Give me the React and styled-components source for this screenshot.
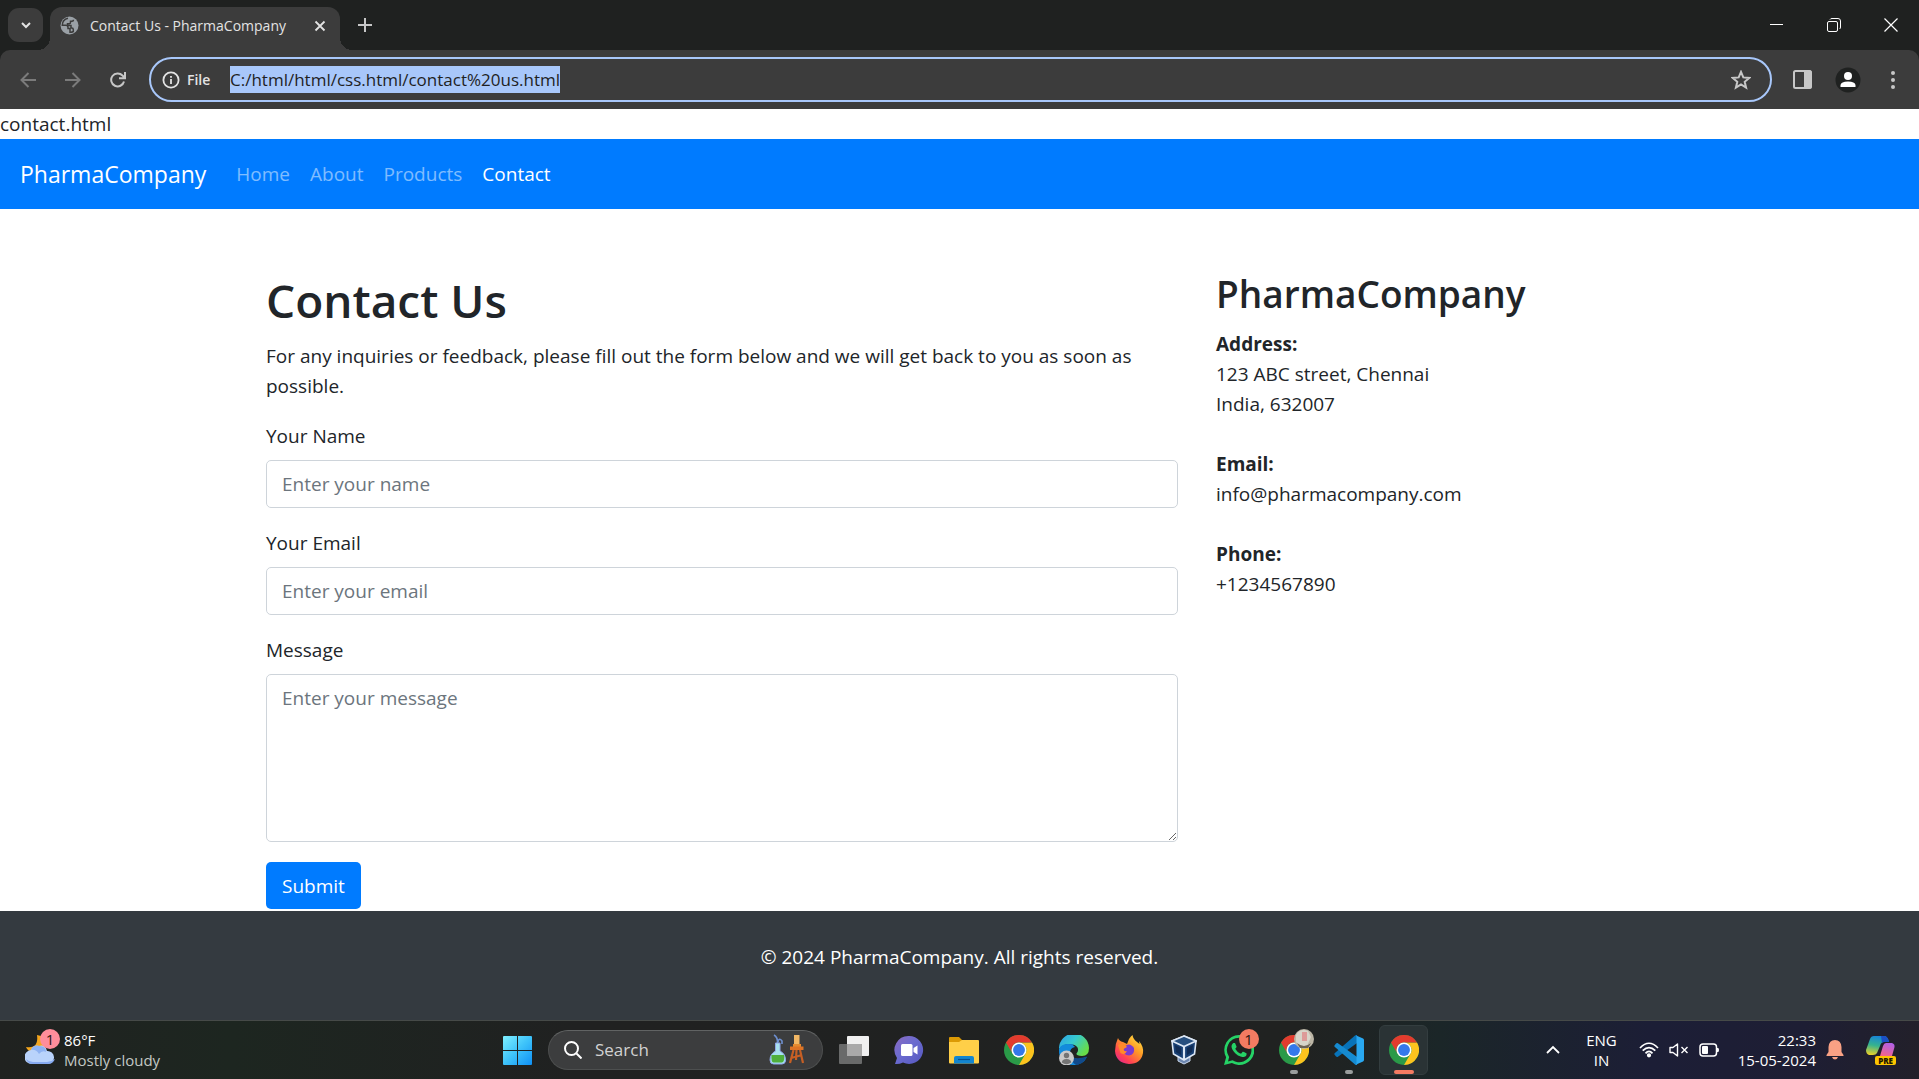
import React from "react";
import styled, { createGlobalStyle } from "styled-components";

const FONT = '"Open Sans", "Noto Sans", sans-serif';

const GlobalStyle = createGlobalStyle`
  *, *::before, *::after { box-sizing: border-box; }
  body {
    margin: 0;
    background: #fff;
    color: #212529;
    font-family: ${FONT};
    font-size: 19px;
    line-height: 30px;
  }
  button, input, textarea { font-family: inherit; }
  svg { display: block; flex: none; }
`;

const Screen = styled.div`
  min-height: 100vh;
  display: flex;
  flex-direction: column;
`;

/* ---------- browser window ---------- */

const TabStrip = styled.div`
  height: 50px;
  display: flex;
  align-items: flex-end;
  padding-left: 8px;
  background: #1f2120;
`;

const PlainButton = styled.button`
  display: flex;
  align-items: center;
  justify-content: center;
  width: ${(p) => p.$w || 45}px;
  height: ${(p) => p.$h || 42}px;
  padding: 0;
  border: 0;
  background: transparent;
  color: ${(p) => p.$color || "#c7c7c7"};
`;

const TabSearch = styled(PlainButton)`
  margin: 0 7px 8px 0;
  border-radius: 11px;
  background: #3c3c3c;
  color: #e3e3e3;
`;

const Tab = styled.div`
  position: relative;
  width: 290px;
  height: 43px;
  display: flex;
  align-items: center;
  gap: 11px;
  padding: 0 7px 6px 10px;
  border-radius: 12px 12px 0 0;
  background: #3c3c3c;
  color: #e3e3e3;

  &::before, &::after {
    content: "";
    position: absolute;
    bottom: 0;
    width: 12px;
    height: 12px;
  }
  &::before {
    right: 100%;
    background: radial-gradient(circle at 0 0, transparent 12px, #3c3c3c 12px);
  }
  &::after {
    left: 100%;
    background: radial-gradient(circle at 100% 0, transparent 12px, #3c3c3c 12px);
  }
`;

const TabTitle = styled.span`
  flex: 1;
  font-size: 14px;
  line-height: 20px;
  white-space: nowrap;
`;

const WindowButtons = styled.div`
  margin-left: auto;
  display: flex;
  height: 50px;
`;

const ToolbarBack = styled.div`
  background: #1f2120;
`;

const Toolbar = styled.div`
  height: 59px;
  display: flex;
  align-items: center;
  padding: 0 4px 0 5px;
  border-radius: 10px 10px 0 0;
  background: #3c3c3c;
`;

const Omnibox = styled.div`
  flex: 1;
  height: 45px;
  margin: 0 8px 0 9px;
  padding: 0 16px 0 11px;
  display: flex;
  align-items: center;
  border: 2px solid #a8c7fa;
  border-radius: 23px;
`;

const SchemeChip = styled.button`
  display: flex;
  align-items: center;
  gap: 7px;
  width: 68px;
  padding: 0;
  border: 0;
  background: transparent;
  color: #e3e3e3;
  font-size: 14px;
  font-weight: 600;
  line-height: 20px;
`;

const UrlInput = styled.input`
  field-sizing: content;
  height: 27px;
  padding: 0;
  border: 0;
  outline: 0;
  background: #a8c7fa;
  color: #1f1f1f;
  font-size: 17px;
  line-height: 27px;
`;

const StarButton = styled(PlainButton)`
  margin-left: auto;
`;

/* ---------- web page ---------- */

const Navbar = styled.nav`
  display: flex;
  align-items: center;
  height: 70px;
  padding: 0 20px;
  background: #007bff;
`;

const Brand = styled.a`
  margin-right: 20px;
  color: #fff;
  font-size: 23px;
  line-height: 38px;
  text-decoration: none;
`;

const NavLink = styled.a`
  padding: 10px;
  color: ${(p) => (p.$active ? "#fff" : "rgba(255, 255, 255, 0.5)")};
  text-decoration: none;
`;

const Main = styled.main`
  flex: 1;
`;

const Container = styled.div`
  width: 100%;
  max-width: 1425px;
  margin: 60px auto 0;
  display: grid;
  grid-template-columns: 2fr 1fr;
`;

const Column = styled.section`
  padding: 0 19px;
`;

const PageTitle = styled.h1`
  margin: 0 0 10px;
  font-size: 46px;
  font-weight: 600;
  line-height: 62px;
`;

const CompanyTitle = styled.h2`
  margin: 0 0 10px;
  font-size: 37px;
  font-weight: 600;
  line-height: 50px;
`;

const Text = styled.p`
  margin: 0 0 20px;
`;

const Block = styled.div`
  margin-bottom: 30px;
`;

const Field = styled.div`
  display: flex;
  flex-direction: column;
  gap: 9px;
  margin-bottom: 20px;
`;

const TextBox = styled.input`
  width: 100%;
  height: 48px;
  padding: 8px 15px;
  border: 1px solid #ced4da;
  border-radius: 5px;
  background: #fff;
  color: #495057;
  font-size: 19px;
  line-height: 30px;
  &::placeholder { color: #6c757d; opacity: 1; }
`;

const MessageBox = styled(TextBox)`
  display: block;
  height: auto;
  resize: vertical;
`;

const Submit = styled.button`
  height: 47px;
  padding: 0 16px;
  border: 0;
  border-radius: 5px;
  background: #007bff;
  color: #fff;
  font-size: 19px;
  line-height: 30px;
`;

const Footer = styled.footer`
  padding: 31px 20px 48px;
  background: #343a40;
  color: #fff;
  text-align: center;
`;

/* ---------- taskbar ---------- */

const Taskbar = styled.div`
  display: grid;
  grid-template-columns: 1fr auto 1fr;
  align-items: center;
  height: 59px;
  padding-left: 2px;
  border-top: 1px solid #464a48;
  background: linear-gradient(90deg, #202220 0%, #1d2620 12%, #202121 30%, #202221 68%, #1b2628 75%, #1c1e36 86%, #1e1e34 94%, #22202a 100%);
  color: #fff;
`;

const Weather = styled.button`
  justify-self: start;
  display: flex;
  align-items: center;
  gap: 9px;
  padding: 0 0 0 23px;
  border: 0;
  background: transparent;
  color: #fff;
  font-size: 15px;
  line-height: 20px;
  text-align: left;
`;

const Muted = styled.span`
  color: #c3c8c4;
`;

const Stack = styled.span`
  display: flex;
  flex-direction: column;
  align-items: ${(p) => p.$align || "flex-start"};
`;

const IconWrap = styled.span`
  position: relative;
  display: block;
`;

const Badge = styled.span`
  position: absolute;
  top: -6px;
  right: -5px;
  width: 20px;
  height: 20px;
  border-radius: 50%;
  background: ${(p) => p.$color};
  color: #2a1512;
  font-size: 15px;
  line-height: 20px;
  text-align: center;
`;

const Apps = styled.div`
  display: flex;
  align-items: center;
`;

const AppButton = styled.button`
  position: relative;
  display: flex;
  align-items: center;
  justify-content: center;
  width: 49px;
  height: 50px;
  margin: 0 3px;
  padding: 0;
  border: 1px solid ${(p) => (p.$active ? "#333d3f" : "transparent")};
  border-radius: 6px;
  background: ${(p) => (p.$active ? "#2a3335" : "transparent")};

  &::after {
    content: "";
    display: ${(p) => (p.$mark ? "block" : "none")};
    position: absolute;
    bottom: 0;
    left: 50%;
    width: ${(p) => (p.$active ? 20 : 8)}px;
    height: 4px;
    transform: translateX(-50%);
    border-radius: 2px;
    background: ${(p) => p.$mark};
  }
`;

const SearchBox = styled.label`
  display: flex;
  align-items: center;
  gap: 13px;
  width: 275px;
  height: 40px;
  margin: 0 3px;
  padding: 0 17px 0 15px;
  border: 1px solid #4d4f4f;
  border-top-color: #616363;
  border-radius: 20px;
  background: #3c3d3e;
`;

const SearchInput = styled.input`
  flex: 1;
  min-width: 0;
  padding: 0;
  border: 0;
  outline: 0;
  background: transparent;
  color: #fff;
  font-size: 17px;
  line-height: 24px;
  &::placeholder { color: #d2d2d2; opacity: 1; }
`;

const Tray = styled.div`
  justify-self: end;
  display: flex;
  align-items: center;
  padding-right: 23px;
`;

const TrayButton = styled.button`
  display: flex;
  align-items: center;
  gap: ${(p) => p.$gap || 0}px;
  margin-right: ${(p) => p.$after || 0}px;
  padding: 0;
  border: 0;
  background: transparent;
  color: #fff;
  font-size: 15px;
  line-height: 20px;
`;

/* ---------- drawings ---------- */

const Stroke = ({ size = 20, w = 2, d, children }) => (
  <svg width={size} height={size} viewBox={`0 0 ${size} ${size}`} fill="none" stroke="currentColor" strokeWidth={w}>
    {d && <path d={d} />}
    {children}
  </svg>
);

const Globe = () => (
  <svg width="19" height="19" viewBox="0 0 19 19">
    <circle cx="9.5" cy="9.5" r="9" fill="#9aa0a6" />
    <path d="M8 2.2C4.600 3 2.300 6 2.300 9.300h3.400c1.500 0 2.300.9 2.300 2.200v1h2v3.800c1 .2 2.200-.2 3.300-.8v-1.800c0-1-.6-1.600-1.500-1.600H11V9.500H7.500V7.700h1.800c.8 0 1.200-.5 1.200-1.200V5.300h1.500c.9 0 1.500-.7 1.500-1.500" fill="none" stroke="#3c3c3c" strokeWidth="1.500" />
  </svg>
);

const Chrome = () => (
  <svg width="30" height="30" viewBox="0 0 48 48">
    <circle cx="24" cy="24" r="24" fill="#2a9a48" />
    <path d="M24 12H44.800A24 24 0 0 1 24 48L34.400 30A12 12 0 0 0 24 12Z" fill="#fcc31e" />
    <path d="M3.200 12A24 24 0 0 1 44.800 12H24A12 12 0 0 0 13.600 30Z" fill="#e33b2e" />
    <circle cx="24" cy="24" r="12" fill="#fff" />
    <circle cx="24" cy="24" r="9.500" fill="#3478ea" />
  </svg>
);

const Windows = () => (
  <svg width="29" height="29" viewBox="0 0 29 29">
    <defs>
      <linearGradient id="win" x1="0" y1="0" x2="1" y2="1">
        <stop offset="0" stopColor="#7ff0ff" />
        <stop offset="0.500" stopColor="#3ec3fa" />
        <stop offset="1" stopColor="#0f90f5" />
      </linearGradient>
    </defs>
    <path d="M0 1Q0 0 1 0H14V14H0ZM15 0H28Q29 0 29 1V14H15ZM0 15H14V29H1Q0 29 0 28ZM15 15H29V28Q29 29 28 29H15Z" fill="url(#win)" />
  </svg>
);

const FlaskAndStool = () => (
  <svg width="36" height="32" viewBox="0 0 36 32">
    <path d="M5 1Q9 3 8.500 10M9 8Q10 3 13 7V10" fill="none" stroke="#6d8fd0" strokeWidth="1.600" />
    <path d="M6.500 9H11V17Q17 20 16.500 27Q16 30 13 30H4.500Q1 30 1 26Q1 20 6.500 17Z" fill="#a8e1ee" stroke="#8fa5e8" />
    <path d="M2.500 21H15Q16 28 13 28.500H4.500Q2 28.500 2.500 21Z" fill="#4faf3c" />
    <path d="M25 1H30.500V12H25Z" fill="#f1b765" />
    <path d="M24 10H32V13H24Z" fill="#e58b30" />
    <path d="M21 12.500H34.500V16H21Z" fill="#dd7426" />
    <path d="M24.500 16 21 29M31 16 34 29M27.500 16 27 26M22 24 33 21" fill="none" stroke="#c65f24" strokeWidth="2.200" />
  </svg>
);

const TaskView = () => (
  <svg width="30" height="28" viewBox="0 0 30 28">
    <rect x="8" y="0" width="22" height="20" rx="1" fill="#f0f0f0" />
    <rect x="0" y="8" width="23" height="20" rx="1" fill="#777" fillOpacity="0.850" />
    <rect x="8" y="8" width="15" height="12" fill="#a9a9a9" />
  </svg>
);

const Chat = () => (
  <svg width="30" height="30" viewBox="0 0 30 30">
    <defs>
      <linearGradient id="chat" x1="0" y1="0" x2="1" y2="1">
        <stop offset="0" stopColor="#8b6bc0" />
        <stop offset="0.450" stopColor="#6b6bd0" />
        <stop offset="1" stopColor="#5558c0" />
      </linearGradient>
    </defs>
    <path d="M15 1A14 14 0 1 1 9 27.600Q5 29.500 1 29L3 23A14 14 0 0 1 15 1Z" fill="url(#chat)" />
    <rect x="7" y="9" width="11.500" height="12" rx="1.500" fill="#fff" />
    <path d="M19.500 13 23.500 10.500V19.500L19.500 17Z" fill="#fff" />
  </svg>
);

const Explorer = () => (
  <svg width="30" height="28" viewBox="0 0 30 28">
    <path d="M0 2Q0 1 1 1H10L13 4V9H0Z" fill="#dc9a05" />
    <path d="M0 6H10L13 4H29Q30 4 30 5V26.500Q30 27.500 29 27.500H1Q0 27.500 0 26.500Z" fill="#ffcf48" />
    <path d="M5 27.500V22Q5 20 7 20H23Q25 20 25 22V27.500Z" fill="#1385cf" />
    <path d="M9 23.500H21" stroke="#084f8f" strokeWidth="1.200" />
  </svg>
);

const Edge = () => (
  <svg width="30" height="30" viewBox="0 0 30 30">
    <defs>
      <linearGradient id="edge" x1="0" y1="0" x2="1" y2="0.600">
        <stop offset="0" stopColor="#2d9ee8" />
        <stop offset="0.500" stopColor="#36c9cf" />
        <stop offset="1" stopColor="#68dc48" />
      </linearGradient>
    </defs>
    <path d="M0 15A15 15 0 0 1 15 9Q10 13 11.500 19Q14 27 28 22Q24 30 15 30A15 15 0 0 1 0 15Z" fill="#0c69b8" />
    <path d="M11.500 19Q14 26 28 21.500Q24 30 15 30Z" fill="#114a8b" />
    <path d="M0 14A15 15 0 0 1 30 13Q30 21 23 21Q17 21 17.500 18.500Q20 16 18.500 12.500Q16 9 11 9Q4 9 0 14Z" fill="url(#edge)" />
    <path d="M0 14Q2 9 9 9Q14 9 16 12Q10 13 11 20Q12 27 17 30Q0 31 0 14Z" fill="#138bdc" />
    <circle cx="7.500" cy="23" r="7.500" fill="#c9c9c9" />
    <circle cx="7.500" cy="20.500" r="2.700" fill="#747474" />
    <path d="M2.800 27.500Q3 24 7.500 24T12.200 27.500Q7.500 31 2.800 27.500Z" fill="#747474" />
  </svg>
);

const Firefox = () => (
  <svg width="30" height="30" viewBox="0 0 30 30">
    <defs>
      <linearGradient id="fox" x1="1" y1="0" x2="0.200" y2="1">
        <stop offset="0" stopColor="#fff04a" />
        <stop offset="0.450" stopColor="#ff9a26" />
        <stop offset="0.800" stopColor="#ff4055" />
        <stop offset="1" stopColor="#e02a8a" />
      </linearGradient>
    </defs>
    <path d="M4 3Q5 6 9 7L13 9 15 4Q17 1 18.500 0Q19 4 23 7L25.500 9 25 6Q30 12 29 18Q27 29 15 29Q2 28 1 16Q1 9 4 3Z" fill="url(#fox)" />
    <path d="M11 11Q16 7 20 13Q21 20 15 20.500Q9 20 9.500 14Z" fill="#7a3bd0" />
    <path d="M4 10Q9 6 13 12L9.500 14Q10 17 13 16Q11 21 6.500 18Z" fill="#ff8a2a" />
  </svg>
);

const VirtualBox = () => (
  <svg width="26" height="30" viewBox="0 0 26 30">
    <path d="M7 22H19V26L13 29 7 26Z" fill="#6d87b0" stroke="#c9d7ec" />
    <path d="M13 1 25 6 23.500 19 13 25 2.500 19 1 6Z" fill="#173f73" stroke="#dce7f5" strokeWidth="1.600" />
    <path d="M13 1 25 6 13 11.500 1 6Z" fill="#264f7f" stroke="#dce7f5" strokeWidth="1.600" />
    <path d="M13 11.500V25" stroke="#dce7f5" strokeWidth="2.200" />
    <path d="M4 10 10 13V20L5 17ZM22 10 16 13V20L21 17Z" fill="#102c55" />
  </svg>
);

const WhatsApp = () => (
  <svg width="30" height="30" viewBox="0 0 24 24" fill="#25d366">
    <path d="M17.472 14.382c-.297-.149-1.758-.867-2.030-.967-.273-.099-.471-.148-.670.150-.197.297-.767.966-.940 1.164-.173.199-.347.223-.644.075-.297-.150-1.255-.463-2.390-1.475-.883-.788-1.480-1.761-1.653-2.059-.173-.297-.018-.458.130-.606.134-.133.298-.347.446-.520.149-.174.198-.298.298-.497.099-.198.050-.371-.025-.520-.075-.149-.669-1.612-.916-2.207-.242-.579-.487-.500-.669-.510-.173-.008-.371-.010-.570-.010-.198 0-.520.074-.792.372-.272.297-1.040 1.016-1.040 2.479 0 1.462 1.065 2.875 1.213 3.074.149.198 2.096 3.200 5.077 4.487.709.306 1.262.489 1.694.625.712.227 1.360.195 1.871.118.571-.085 1.758-.719 2.006-1.413.248-.694.248-1.289.173-1.413-.074-.124-.272-.198-.570-.347" />
    <path fillRule="evenodd" d="M12 0A12 12 0 0 0 1.700 17.800L0 24 6.300 22.400A12 12 0 1 0 12 0ZM12 2.200A9.800 9.800 0 1 1 6.800 20.200L3.200 21.100 4.100 17.600A9.800 9.800 0 0 1 12 2.200Z" />
  </svg>
);

const VsCode = () => (
  <svg width="30" height="30" viewBox="0 0 100 100">
    <path d="M3 67Q-1 63 3 60L70 2Q74-1 77 1V27L12 73Q9 74 6 71Z" fill="#0873b9" />
    <path d="M3 33Q-1 37 3 40L70 98Q74 101 77 99V73L12 27Q9 26 6 29Z" fill="#168bd1" />
    <path d="M72 1 97 12Q100 14 100 17V83Q100 86 97 88L72 99Q75 98 75 93V7Q75 2 72 1Z" fill="#29a8f1" />
  </svg>
);

const Profile = () => (
  <svg width="20" height="20" viewBox="0 0 20 20">
    <circle cx="10" cy="10" r="10" fill="#bcb6a6" />
    <path d="M2 6Q6-1 14 2L17 8 13 17Q5 18 2 13Z" fill="#d8d4c9" />
    <path d="M8 3H13V12H8Z" fill="#dd9a98" />
    <path d="M3 14Q10 20 17 14L14 19H6Z" fill="#6c6154" />
  </svg>
);

const ProfileBadge = styled.span`
  position: absolute;
  top: -6px;
  right: -5px;
`;

const CloudMoon = () => (
  <svg width="30" height="30" viewBox="0 0 30 30">
    <path d="M12 0Q14 14 1 12Q3 18 12 17L20 12V2Z" fill="#f4a61d" />
    <path d="M7 29A7 7 0 0 1 6 15Q8 10 14 11Q20 9 22 16A6.500 6.500 0 0 1 23 29Z" fill="#b9d3fb" />
    <path d="M6 15Q8 9 15 11Q21 11 21 17 17 15 14 19 11 14 6 15Z" fill="#8fb3f2" />
    <path d="M1 24Q3 29 7 29H23Q28 29 30 24Q26 27 22 27H8Q4 27 1 24Z" fill="#86aaf0" />
  </svg>
);

const Wifi = () => (
  <svg width="20" height="16" viewBox="0 0 20 16" fill="none" stroke="currentColor" strokeWidth="1.700">
    <path d="M1 6Q10-3.500 19 6M3.700 8.700Q10 2.500 16.300 8.700M6.500 11.300Q10 7.500 13.500 11.300" />
    <circle cx="10" cy="13.300" r="1.300" fill="currentColor" />
  </svg>
);

const Mute = () => (
  <svg width="20" height="16" viewBox="0 0 20 16" fill="none" stroke="currentColor" strokeWidth="1.400">
    <path d="M1 5.500H4L8.500 2V14L4 10.500H1Z" strokeLinejoin="round" />
    <path d="M12.500 5 18.500 11M18.500 5 12.500 11" />
  </svg>
);

const Battery = () => (
  <svg width="21" height="14" viewBox="0 0 21 14">
    <rect x="1" y="1" width="16.500" height="12" rx="3" fill="none" stroke="currentColor" strokeWidth="1.500" />
    <rect x="3" y="3" width="6" height="8" rx="1" fill="currentColor" />
    <path d="M18 5H19Q20 5 20 7T19 9H18Z" fill="currentColor" />
  </svg>
);

const Bell = () => (
  <svg width="18" height="20" viewBox="0 0 18 20" fill="#f9a184">
    <path d="M9 0Q15 0 15.500 7V12L17.500 15V16H0.500V15L2.500 12V7Q3 0 9 0ZM6 17H12Q11 19.500 9 19.500T6 17Z" />
  </svg>
);

const Copilot = () => (
  <svg width="30" height="30" viewBox="0 0 30 30">
    <defs>
      <linearGradient id="copA" x1="0.500" y1="0" x2="0.300" y2="1">
        <stop offset="0" stopColor="#1784d8" />
        <stop offset="0.500" stopColor="#35b38e" />
        <stop offset="1" stopColor="#e8d02a" />
      </linearGradient>
      <linearGradient id="copB" x1="0.700" y1="0" x2="0.300" y2="1">
        <stop offset="0" stopColor="#b060e8" />
        <stop offset="1" stopColor="#f2648c" />
      </linearGradient>
    </defs>
    <path d="M8 1H19Q22 2 23 7H18Q15 7 14 11L11 18Q10 20 7 20H3Q0 19 0 15L4 4Q5 1 8 1Z" fill="url(#copA)" />
    <path d="M15 1H19Q22 2 23 7H18Q17 7 16 8Z" fill="#1b4fc4" />
    <path d="M20 8H26Q29 9 28.500 12L26 21H14L17 11Q18 8 20 8Z" fill="url(#copB)" />
  </svg>
);

const PreBadge = styled.span`
  position: absolute;
  right: 0;
  bottom: 0;
  padding: 0 3px;
  border-radius: 2px;
  background: #fdc500;
  color: #1c1700;
  font-size: 8px;
  font-weight: 800;
  line-height: 9px;
`;

/* ---------- data ---------- */

const navLinks = ["Home", "About", "Products", "Contact"];

const contactInfo = [
  { title: "Address:", lines: ["123 ABC street, Chennai", "India, 632007"] },
  { title: "Email:", lines: ["info@pharmacompany.com"] },
  { title: "Phone:", lines: ["+1234567890"] },
];

const taskApps = [
  { name: "Task View", icon: <TaskView /> },
  { name: "Chat", icon: <Chat /> },
  { name: "File Explorer", icon: <Explorer /> },
  { name: "Google Chrome", icon: <Chrome /> },
  { name: "Microsoft Edge", icon: <Edge /> },
  { name: "Firefox", icon: <Firefox /> },
  { name: "VirtualBox", icon: <VirtualBox /> },
  { name: "WhatsApp", icon: <WhatsApp />, badge: <Badge $color="#f47b62">1</Badge> },
  { name: "Chrome profile", icon: <Chrome />, badge: <ProfileBadge><Profile /></ProfileBadge>, mark: "#9a9d9d" },
  { name: "Visual Studio Code", icon: <VsCode />, mark: "#9a9d9d" },
  { name: "Chrome window", icon: <Chrome />, mark: "#f47b62", active: true },
];

/* ---------- sections ---------- */

function BrowserChrome() {
  return (
    <header>
      <TabStrip>
        <TabSearch $w={35} $h={34} aria-label="Search tabs">
          <Stroke size={14} d="M3 5 7 9 11 5" />
        </TabSearch>
        <Tab>
          <Globe />
          <TabTitle>Contact Us - PharmaCompany</TabTitle>
          <PlainButton $w={26} $h={26} $color="#e3e3e3" aria-label="Close tab">
            <Stroke size={12} w={1.8} d="M1.500 1.500 10.500 10.500M10.500 1.500 1.500 10.500" />
          </PlainButton>
        </Tab>
        <PlainButton $w={50} $h={50} aria-label="New tab">
          <Stroke size={14} d="M7 0V14M0 7H14" />
        </PlainButton>
        <WindowButtons>
          <PlainButton $w={57} $h={50} $color="#fff" aria-label="Minimize">
            <Stroke size={14} w={1} d="M0 6.500H13" />
          </PlainButton>
          <PlainButton $w={57} $h={50} $color="#fff" aria-label="Restore">
            <Stroke size={14} w={1}>
              <rect x="0.500" y="3.500" width="10" height="10" rx="1.500" />
              <path d="M3 1.500Q3.500 .5 5 .5H11Q13.500 .5 13.500 3V9Q13.500 10.500 12.500 11" />
            </Stroke>
          </PlainButton>
          <PlainButton $w={57} $h={50} $color="#fff" aria-label="Close">
            <Stroke size={14} w={1.2} d="M.5 .5 13.500 13.500M13.500 .5 .5 13.500" />
          </PlainButton>
        </WindowButtons>
      </TabStrip>
      <ToolbarBack>
        <Toolbar>
          <PlainButton $color="#7b7b7b" aria-label="Back">
            <Stroke size={16} d="M16 8H2M8.500 1 1.500 8 8.500 15" />
          </PlainButton>
          <PlainButton $color="#7b7b7b" aria-label="Forward">
            <Stroke size={16} d="M0 8H14M7.500 1 14.500 8 7.500 15" />
          </PlainButton>
          <PlainButton aria-label="Reload">
            <Stroke size={16} d="M14 9.500A6.500 6.500 0 1 1 12.500 3.500L15 6M15 0V6.200H9" />
          </PlainButton>
          <Omnibox>
            <SchemeChip>
              <Stroke size={18} w={1.8}>
                <circle cx="9" cy="9" r="7.600" />
                <path d="M9 8V13M9 5V6.800" />
              </Stroke>
              File
            </SchemeChip>
            <UrlInput aria-label="Address" defaultValue="C:/html/html/css.html/contact%20us.html" spellCheck={false} />
            <StarButton $w={26} $h={26} aria-label="Bookmark this tab">
              <Stroke size={20} w={2} d="M10 1.900 12.300 7.400 18.200 7.900 13.700 11.800 15.100 17.700 10 14.500 4.900 17.700 6.300 11.800 1.800 7.900 7.700 7.400Z" />
            </StarButton>
          </Omnibox>
          <PlainButton aria-label="Side panel">
            <Stroke size={19}>
              <rect x="1" y="1" width="17" height="17" rx="1.500" />
              <path d="M11.500 1H18V18H11.500Z" fill="currentColor" strokeWidth="1" />
            </Stroke>
          </PlainButton>
          <PlainButton aria-label="Profile">
            <svg width="26" height="26" viewBox="0 0 26 26">
              <circle cx="13" cy="13" r="12.500" fill="#1f2120" />
              <circle cx="13" cy="9" r="4" fill="#fff" />
              <path d="M5.500 20V18Q6 14.500 13 14.500T20.500 18V20Z" fill="#fff" />
            </svg>
          </PlainButton>
          <PlainButton aria-label="Menu">
            <svg width="4" height="18" viewBox="0 0 4 18" fill="currentColor">
              <circle cx="2" cy="2" r="2" />
              <circle cx="2" cy="9" r="2" />
              <circle cx="2" cy="16" r="2" />
            </svg>
          </PlainButton>
        </Toolbar>
      </ToolbarBack>
    </header>
  );
}

function ContactPage() {
  return (
    <>
      <div>contact.html</div>
      <Navbar>
        <Brand href="#">PharmaCompany</Brand>
        {navLinks.map((name) => (
          <NavLink key={name} href="#" $active={name === "Contact"}>{name}</NavLink>
        ))}
      </Navbar>
      <Main>
        <Container>
          <Column>
            <PageTitle>Contact Us</PageTitle>
            <Text>For any inquiries or feedback, please fill out the form below and we will get back to you as soon as possible.</Text>
            <form onSubmit={(e) => e.preventDefault()}>
              <Field>
                <label htmlFor="name">Your Name</label>
                <TextBox id="name" type="text" placeholder="Enter your name" />
              </Field>
              <Field>
                <label htmlFor="email">Your Email</label>
                <TextBox id="email" type="email" placeholder="Enter your email" />
              </Field>
              <Field>
                <label htmlFor="message">Message</label>
                <MessageBox as="textarea" id="message" rows={5} placeholder="Enter your message" />
              </Field>
              <Submit type="submit">Submit</Submit>
            </form>
          </Column>
          <Column>
            <CompanyTitle>PharmaCompany</CompanyTitle>
            {contactInfo.map((item) => (
              <Block key={item.title}>
                <strong>{item.title}</strong>
                {item.lines.map((line) => <div key={line}>{line}</div>)}
              </Block>
            ))}
          </Column>
        </Container>
      </Main>
      <Footer>© 2024 PharmaCompany. All rights reserved.</Footer>
    </>
  );
}

function WindowsTaskbar() {
  return (
    <Taskbar>
      <Weather>
        <IconWrap>
          <CloudMoon />
          <Badge $color="#ff8d9b">1</Badge>
        </IconWrap>
        <Stack>
          <span>86°F</span>
          <Muted>Mostly cloudy</Muted>
        </Stack>
      </Weather>
      <Apps>
        <AppButton aria-label="Start"><Windows /></AppButton>
        <SearchBox>
          <Stroke size={18} d="M12.500 12.500 17.500 17.500">
            <circle cx="7.500" cy="7.500" r="6.500" />
          </Stroke>
          <SearchInput type="text" placeholder="Search" aria-label="Search" />
          <FlaskAndStool />
        </SearchBox>
        {taskApps.map((app) => (
          <AppButton key={app.name} aria-label={app.name} $active={app.active} $mark={app.mark}>
            <IconWrap>{app.icon}{app.badge}</IconWrap>
          </AppButton>
        ))}
      </Apps>
      <Tray>
        <TrayButton $after={26} aria-label="Show hidden icons">
          <Stroke size={14} w={1.8} d="M1 10 7 4 13 10" />
        </TrayButton>
        <TrayButton $after={22}>
          <Stack $align="center"><span>ENG</span><span>IN</span></Stack>
        </TrayButton>
        <TrayButton $gap={10} $after={18} aria-label="Network, sound and battery">
          <Wifi /><Mute /><Battery />
        </TrayButton>
        <TrayButton $gap={10} $after={22}>
          <Stack $align="flex-end"><span>22:33</span><span>15-05-2024</span></Stack>
          <Bell />
        </TrayButton>
        <TrayButton aria-label="Copilot">
          <IconWrap><Copilot /><PreBadge>PRE</PreBadge></IconWrap>
        </TrayButton>
      </Tray>
    </Taskbar>
  );
}

export default function App() {
  return (
    <Screen>
      <GlobalStyle />
      <BrowserChrome />
      <ContactPage />
      <WindowsTaskbar />
    </Screen>
  );
}
